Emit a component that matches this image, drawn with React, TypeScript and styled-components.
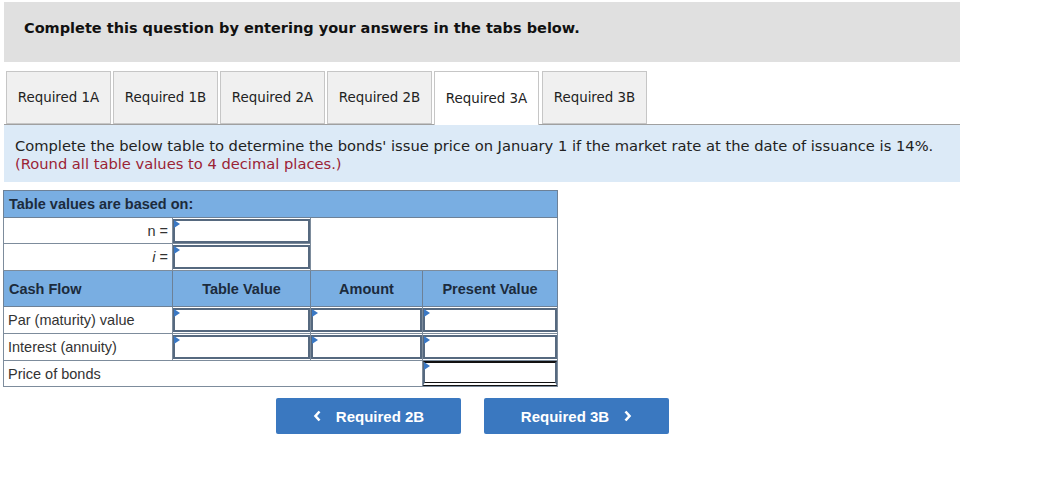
import React from "react";
import styled, { createGlobalStyle } from "styled-components";

const Global = createGlobalStyle`
  html, body { margin: 0; padding: 0; background: #ffffff; }
  body { font-family: "DejaVu Sans", Verdana, sans-serif; }
`;

const Page = styled.div`
  width: 956px;
  margin: 2px 0 0 4px;
`;

const Banner = styled.div`
  box-sizing: border-box;
  height: 60px;
  background: #e0e0e0;
  padding: 18px 20px 0 20px;
  font-family: "DejaVu Sans", Verdana, sans-serif;
  font-weight: bold;
  font-size: 14.5px;
  color: #111;
`;

const TabBar = styled.div`
  display: flex;
  gap: 2px;
  margin-top: 9px;
  padding-left: 2px;
  border-bottom: 1px solid #a0a0a0;
  height: 54px;
  box-sizing: border-box;
`;

const Tab = styled.div<{ $active?: boolean }>`
  box-sizing: border-box;
  width: 105px;
  height: ${(p) => (p.$active ? "54px" : "53px")};
  display: flex;
  align-items: center;
  justify-content: center;
  background: ${(p) => (p.$active ? "#ffffff" : "#f0f0f0")};
  border: 1px solid #c6c6c6;
  border-bottom: ${(p) => (p.$active ? "none" : "1px solid #c6c6c6")};
  font-family: "DejaVu Sans", Verdana, sans-serif;
  font-size: 13.4px;
  color: #222;
  margin-right: ${(p) => (p.$active ? "1px" : "0")};
`;

const Instruction = styled.div`
  box-sizing: border-box;
  height: 57px;
  background: #dceaf7;
  padding: 12px 11px 0 11px;
  font-family: "DejaVu Sans", Verdana, sans-serif;
  font-size: 14.7px;
  line-height: 18px;
  color: #222;
`;

const Note = styled.div`
  color: #9b2335;
`;

const Table = styled.table`
  margin-top: 8px;
  margin-left: -1px;
  border-collapse: collapse;
  width: 554px;
  table-layout: fixed;
  font-family: "Liberation Sans", Arial, sans-serif;
  font-size: 14.5px;
  color: #333;
`;

const HeadRow = styled.tr<{ $h: number }>`
  background: #79aee2;
  height: ${(p) => p.$h}px;
`;

const HeadCell = styled.th<{ $align?: string }>`
  border: 1px solid #6d8197;
  padding: 0 5px;
  font-weight: bold;
  color: #1c2b3c;
  text-align: ${(p) => p.$align ?? "center"};
`;

const Row = styled.tr<{ $h: number }>`
  height: ${(p) => p.$h}px;
`;

const Cell = styled.td<{ $align?: string }>`
  border: 1px solid #7d8c9c;
  padding: 0 4px;
  text-align: ${(p) => p.$align ?? "left"};
  color: #333;
`;

const BlankCell = styled.td`
  border: 1px solid #7d8c9c;
  background: #fff;
`;

const InputCell = styled.td`
  border: 1px solid #7d8c9c;
  padding: 0;
`;

const InputBox = styled.div<{ $total?: boolean }>`
  position: relative;
  box-sizing: border-box;
  height: ${(p) => (p.$total ? "25px" : "24px")};
  margin: 0;
  border: 2px solid #56697f;
  border-top: ${(p) => (p.$total ? "2px solid #111" : "2px solid #56697f")};
  border-bottom: ${(p) => (p.$total ? "4px double #111" : "2px solid #56697f")};
  background: #fff;
  &::before {
    content: "";
    position: absolute;
    left: -1px;
    top: -1px;
    border-left: 6px solid #3a78c4;
    border-top: 4px solid transparent;
    border-bottom: 4px solid transparent;
  }
`;

const Italic = styled.i`
  font-style: italic;
`;

const Nav = styled.div`
  display: flex;
  gap: 23px;
  margin-top: 11px;
  padding-left: 272px;
`;

const NavButton = styled.button`
  box-sizing: border-box;
  width: 185px;
  height: 36px;
  display: flex;
  align-items: center;
  justify-content: center;
  gap: 14px;
  border: none;
  border-radius: 2px;
  background: #3a78c0;
  color: #fff;
  font-family: "Liberation Sans", Arial, sans-serif;
  font-weight: bold;
  font-size: 15px;
  cursor: pointer;
`;

const Chevron = ({ dir }: { dir: "left" | "right" }) => (
  <svg width="9" height="12" viewBox="0 0 9 12">
    <path
      d={dir === "left" ? "M6.5 1.5 L2.5 6 L6.5 10.5" : "M2.5 1.5 L6.5 6 L2.5 10.5"}
      fill="none"
      stroke="#fff"
      strokeWidth="2.6"
    />
  </svg>
);

const tabs = ["Required 1A", "Required 1B", "Required 2A", "Required 2B", "Required 3A", "Required 3B"];

export default function App() {
  return (
    <>
      <Global />
      <Page>
        <Banner>Complete this question by entering your answers in the tabs below.</Banner>
        <TabBar>
          {tabs.map((t) => (
            <Tab key={t} $active={t === "Required 3A"}>
              {t}
            </Tab>
          ))}
        </TabBar>
        <Instruction>
          <div>
            Complete the below table to determine the bonds' issue price on January 1 if the market rate at the date of issuance is 14%.
          </div>
          <Note>(Round all table values to 4 decimal places.)</Note>
        </Instruction>
        <Table>
          <colgroup>
            <col style={{ width: 169 }} />
            <col style={{ width: 138 }} />
            <col style={{ width: 112 }} />
            <col style={{ width: 135 }} />
          </colgroup>
          <tbody>
            <HeadRow $h={27}>
              <HeadCell colSpan={4} $align="left">
                Table values are based on:
              </HeadCell>
            </HeadRow>
            <Row $h={26}>
              <Cell $align="right">n =</Cell>
              <InputCell>
                <InputBox />
              </InputCell>
              <BlankCell colSpan={2} rowSpan={2} />
            </Row>
            <Row $h={27}>
              <Cell $align="right">
                <Italic>i</Italic> =
              </Cell>
              <InputCell>
                <InputBox />
              </InputCell>
            </Row>
            <HeadRow $h={36}>
              <HeadCell $align="left">Cash Flow</HeadCell>
              <HeadCell>Table Value</HeadCell>
              <HeadCell>Amount</HeadCell>
              <HeadCell>Present Value</HeadCell>
            </HeadRow>
            <Row $h={27}>
              <Cell>Par (maturity) value</Cell>
              <InputCell>
                <InputBox />
              </InputCell>
              <InputCell>
                <InputBox />
              </InputCell>
              <InputCell>
                <InputBox />
              </InputCell>
            </Row>
            <Row $h={27}>
              <Cell>Interest (annuity)</Cell>
              <InputCell>
                <InputBox />
              </InputCell>
              <InputCell>
                <InputBox />
              </InputCell>
              <InputCell>
                <InputBox />
              </InputCell>
            </Row>
            <Row $h={26}>
              <Cell colSpan={3}>Price of bonds</Cell>
              <InputCell>
                <InputBox $total />
              </InputCell>
            </Row>
          </tbody>
        </Table>
        <Nav>
          <NavButton>
            <Chevron dir="left" />
            Required 2B
          </NavButton>
          <NavButton>
            Required 3B
            <Chevron dir="right" />
          </NavButton>
        </Nav>
      </Page>
    </>
  );
}
